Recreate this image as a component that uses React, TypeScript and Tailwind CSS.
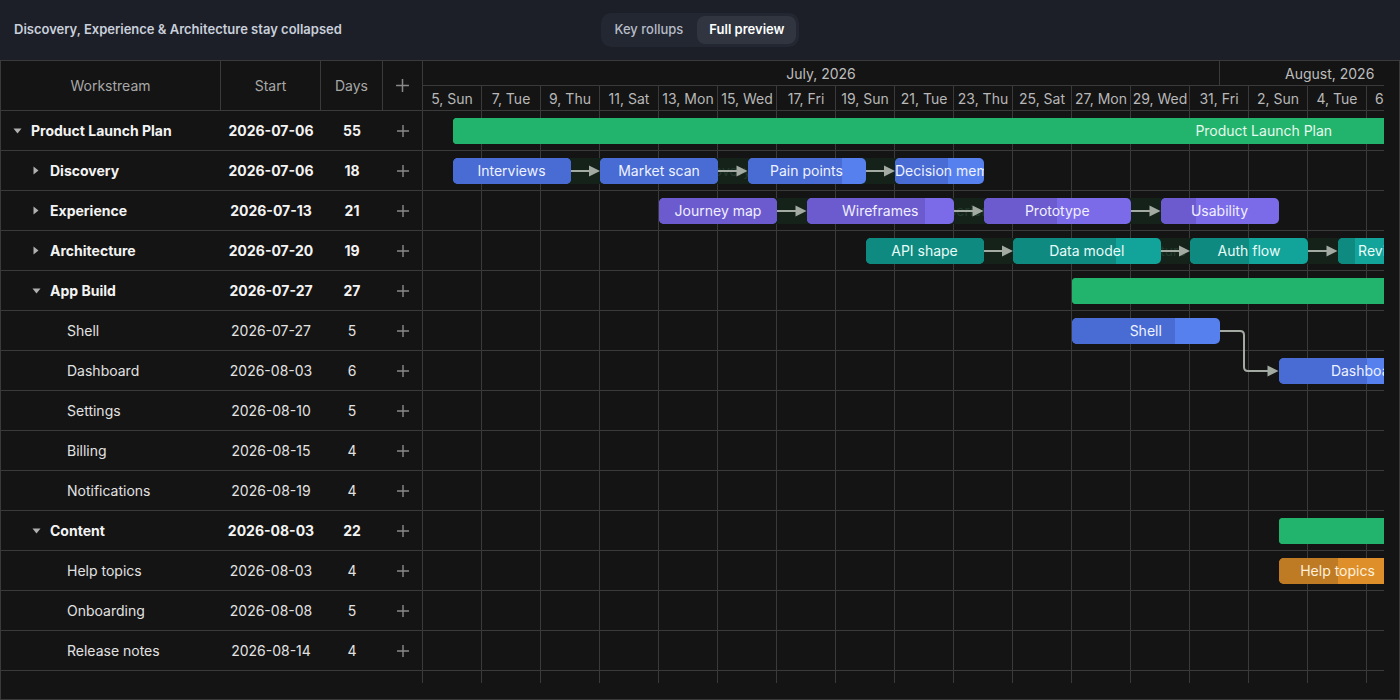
import React from 'react';

const D = 29.5;

type Color = 'green' | 'blue' | 'purple' | 'teal' | 'orange';
const PAL: Record<Color, { base: string; prog: string; text: string; round: string }> = {
  green: { base: 'bg-[#22b46c]', prog: 'bg-[#22b46c]', text: 'text-[#e6f7ec]', round: 'rounded-[4px]' },
  blue: { base: 'bg-[#5580ee]', prog: 'bg-[#486bd4]', text: 'text-[#eef2ff]', round: 'rounded-[5px]' },
  purple: { base: 'bg-[#7b6be8]', prog: 'bg-[#6b5bcf]', text: 'text-[#f1efff]', round: 'rounded-[5px]' },
  teal: { base: 'bg-[#12a39a]', prog: 'bg-[#0e8a80]', text: 'text-[#e8fbf8]', round: 'rounded-[5px]' },
  orange: { base: 'bg-[#de8f2a]', prog: 'bg-[#bf7a24]', text: 'text-[#fdf0dc]', round: 'rounded-[5px]' },
};

type Task = { label: string; start: number; days: number; pct: number; color: Color };
type Row = {
  name: string;
  level: 0 | 1 | 2;
  caret?: 'down' | 'right';
  start: string;
  days: number;
  bold?: boolean;
  band?: { start: number; days: number; label: string };
  bars: Task[];
  chain?: boolean;
};

const ROWS: Row[] = [
  {
    name: 'Product Launch Plan', level: 0, caret: 'down', start: '2026-07-06', days: 55, bold: true,
    bars: [{ label: 'Product Launch Plan', start: 1, days: 55, pct: 100, color: 'green' }],
  },
  {
    name: 'Discovery', level: 1, caret: 'right', start: '2026-07-06', days: 18, bold: true, chain: true,
    band: { start: 1, days: 18, label: 'Discovery' },
    bars: [
      { label: 'Interviews', start: 1, days: 4, pct: 100, color: 'blue' },
      { label: 'Market scan', start: 6, days: 4, pct: 100, color: 'blue' },
      { label: 'Pain points', start: 11, days: 4, pct: 80, color: 'blue' },
      { label: 'Decision memo', start: 16, days: 3, pct: 60, color: 'blue' },
    ],
  },
  {
    name: 'Experience', level: 1, caret: 'right', start: '2026-07-13', days: 21, bold: true, chain: true,
    band: { start: 8, days: 21, label: 'Experience' },
    bars: [
      { label: 'Journey map', start: 8, days: 4, pct: 100, color: 'purple' },
      { label: 'Wireframes', start: 13, days: 5, pct: 80, color: 'purple' },
      { label: 'Prototype', start: 19, days: 5, pct: 50, color: 'purple' },
      { label: 'Usability', start: 25, days: 4, pct: 30, color: 'purple' },
    ],
  },
  {
    name: 'Architecture', level: 1, caret: 'right', start: '2026-07-20', days: 19, bold: true, chain: true,
    band: { start: 15, days: 19, label: 'Architecture' },
    bars: [
      { label: 'API shape', start: 15, days: 4, pct: 100, color: 'teal' },
      { label: 'Data model', start: 20, days: 5, pct: 70, color: 'teal' },
      { label: 'Auth flow', start: 26, days: 4, pct: 50, color: 'teal' },
      { label: 'Review', start: 31, days: 3, pct: 20, color: 'teal' },
    ],
  },
  {
    name: 'App Build', level: 1, caret: 'down', start: '2026-07-27', days: 27, bold: true,
    bars: [{ label: 'App Build', start: 22, days: 27, pct: 100, color: 'green' }],
  },
  { name: 'Shell', level: 2, start: '2026-07-27', days: 5, bars: [{ label: 'Shell', start: 22, days: 5, pct: 70, color: 'blue' }] },
  { name: 'Dashboard', level: 2, start: '2026-08-03', days: 6, bars: [{ label: 'Dashboard', start: 29, days: 6, pct: 50, color: 'blue' }] },
  { name: 'Settings', level: 2, start: '2026-08-10', days: 5, bars: [{ label: 'Settings', start: 36, days: 5, pct: 30, color: 'blue' }] },
  { name: 'Billing', level: 2, start: '2026-08-15', days: 4, bars: [{ label: 'Billing', start: 41, days: 4, pct: 0, color: 'blue' }] },
  { name: 'Notifications', level: 2, start: '2026-08-19', days: 4, bars: [{ label: 'Notifications', start: 45, days: 4, pct: 0, color: 'blue' }] },
  {
    name: 'Content', level: 1, caret: 'down', start: '2026-08-03', days: 22, bold: true,
    bars: [{ label: 'Content', start: 29, days: 22, pct: 100, color: 'green' }],
  },
  { name: 'Help topics', level: 2, start: '2026-08-03', days: 4, bars: [{ label: 'Help topics', start: 29, days: 4, pct: 50, color: 'orange' }] },
  { name: 'Onboarding', level: 2, start: '2026-08-08', days: 5, bars: [{ label: 'Onboarding', start: 34, days: 5, pct: 30, color: 'orange' }] },
  { name: 'Release notes', level: 2, start: '2026-08-14', days: 4, bars: [{ label: 'Release notes', start: 40, days: 4, pct: 0, color: 'orange' }] },
];

const PAD: Record<number, string> = { 0: 'pl-[8px]', 1: 'pl-[27px]', 2: 'pl-[44px]' };
const WD = ['Sun', 'Mon', 'Tue', 'Wed', 'Thu', 'Fri', 'Sat'];
const DAYCOLS = Array.from({ length: 36 }, (_, i) => {
  const d = new Date(2026, 6, 5 + i * 2);
  return `${d.getDate()}, ${WD[d.getDay()]}`;
});

function PlusIcon({ size = 14 }: { size?: number }) {
  return (
    <svg width={size} height={size} viewBox="0 0 14 14" fill="none">
      <path d="M7 1v12M1 7h12" stroke="#8a8a8a" strokeWidth="1.4" />
    </svg>
  );
}

function Caret({ dir }: { dir: 'down' | 'right' }) {
  return dir === 'down' ? (
    <svg width="9" height="6" viewBox="0 0 9 6">
      <path d="M0.5 0.5h8L4.5 5.5z" fill="#b0b0b0" />
    </svg>
  ) : (
    <svg width="6" height="9" viewBox="0 0 6 9">
      <path d="M0.5 0.5v8L5.5 4.5z" fill="#b0b0b0" />
    </svg>
  );
}

function Bar({ t }: { t: Task }) {
  const p = PAL[t.color];
  return (
    <div
      className={`absolute top-[7px] h-[26px] overflow-hidden ${p.round} ${p.base}`}
      style={{ left: t.start * D, width: t.days * D }}
    >
      <div className={`absolute inset-y-0 left-0 ${p.prog}`} style={{ width: `${t.pct}%` }} />
      <div className={`relative w-full overflow-hidden whitespace-nowrap text-center text-[14px] leading-[26px] ${p.text}`}>
        {t.label}
      </div>
    </div>
  );
}

function Arrows() {
  const parts: React.ReactNode[] = [];
  const C = '#a2aaa2';
  const head = (x: number, y: number, k: string) => (
    <path key={k} d={`M${x - 11} ${y - 5.5}L${x} ${y}L${x - 11} ${y + 5.5}z`} fill={C} />
  );
  ROWS.forEach((r, ri) => {
    if (!r.chain) return;
    const y = ri * 40 + 20;
    for (let i = 0; i < r.bars.length - 1; i++) {
      const a = r.bars[i];
      const b = r.bars[i + 1];
      const x1 = (a.start + a.days) * D;
      const x2 = b.start * D;
      parts.push(<path key={`l${ri}-${i}`} d={`M${x1} ${y}H${x2 - 10}`} stroke={C} strokeWidth="2" fill="none" />);
      parts.push(head(x2, y, `h${ri}-${i}`));
    }
  });
  // Shell -> Dashboard
  const sx = 27 * D;
  const dx = 29 * D;
  const y1 = 5 * 40 + 20;
  const y2 = 6 * 40 + 20;
  const vx = sx + 24.5;
  parts.push(
    <path
      key="sd"
      d={`M${sx} ${y1}H${vx - 4}Q${vx} ${y1} ${vx} ${y1 + 4}V${y2 - 4}Q${vx} ${y2} ${vx + 4} ${y2}H${dx - 10}`}
      stroke={C}
      strokeWidth="2"
      fill="none"
    />
  );
  parts.push(head(dx, y2, 'sdh'));
  return (
    <svg className="pointer-events-none relative col-start-1 row-start-1" width={2100} height={560}>
      {parts}
    </svg>
  );
}

export default function App() {
  return (
    <div className="flex h-[700px] w-[1400px] flex-col bg-[#1c1f27] font-['Inter',sans-serif]">
      {/* top bar */}
      <div className="flex h-[60px] shrink-0 items-center px-[14px]">
        <div className="flex-1 text-[13px] font-semibold text-[#c9cfdb]">
          Discovery, Experience &amp; Architecture stay collapsed
        </div>
        <div className="flex items-center gap-[3px] rounded-[10px] bg-[#232731] p-[3px]">
          <div className="flex h-[28px] items-center rounded-[8px] px-[11px] text-[13px] font-medium text-[#b6bcc8]">
            Key rollups
          </div>
          <div className="flex h-[28px] items-center rounded-[8px] bg-[#30353f] px-[12px] text-[13px] font-semibold text-white">
            Full preview
          </div>
        </div>
        <div className="flex-1" />
      </div>

      {/* gantt */}
      <div className="flex h-[640px] flex-col border border-[#3a3a3a] bg-[#141414]">
        <div className="flex h-[622px]">
          {/* grid table */}
          <div className="flex w-[422px] shrink-0 flex-col border-r border-[#3a3a3a]">
            <div className="flex h-[50px] shrink-0 border-b border-[#3a3a3a] text-[14px] text-[#a8a8a8]">
              <div className="flex w-[220px] items-center justify-center border-r border-[#3a3a3a]">Workstream</div>
              <div className="flex w-[100px] items-center justify-center border-r border-[#3a3a3a]">Start</div>
              <div className="flex w-[62px] items-center justify-center border-r border-[#3a3a3a]">Days</div>
              <div className="flex flex-1 items-center justify-center">
                <PlusIcon size={15} />
              </div>
            </div>
            {ROWS.map((r) => (
              <div
                key={r.name}
                className={`flex h-[40px] shrink-0 border-b border-[#3a3a3a] text-[14px] ${
                  r.bold ? 'font-bold text-[#f3f3f3]' : 'font-normal text-[#e2e2e2]'
                }`}
              >
                <div className={`flex w-[220px] items-center ${PAD[r.level]}`}>
                  <div className="flex w-[16px] items-center justify-center">{r.caret && <Caret dir={r.caret} />}</div>
                  <span className="ml-[6px] whitespace-nowrap">{r.name}</span>
                </div>
                <div className="flex w-[100px] items-center justify-center">{r.start}</div>
                <div className="flex w-[62px] items-center justify-center">{r.days}</div>
                <div className="flex flex-1 items-center justify-center">
                  <PlusIcon />
                </div>
              </div>
            ))}
          </div>

          {/* chart */}
          <div className="w-[961px] shrink-0 overflow-hidden">
            <div className="w-[2100px]">
              <div className="flex h-[25px] border-b border-[#3a3a3a] text-[14px] text-[#bdbdbd]">
                <div className="flex w-[797px] shrink-0 items-center justify-center border-r border-[#3a3a3a]">July, 2026</div>
                <div className="flex flex-1 items-center pl-[65px]">August, 2026</div>
              </div>
              <div className="flex h-[25px] border-b border-[#3a3a3a] text-[14px] text-[#b8b8b8]">
                {DAYCOLS.map((d, i) => (
                  <div key={i} className="flex w-[59px] shrink-0 items-center justify-center whitespace-nowrap border-r border-[#3a3a3a]">
                    {d}
                  </div>
                ))}
              </div>
              <div className="grid">
                <div className="relative col-start-1 row-start-1 flex h-[572px]">
                  {DAYCOLS.map((_, i) => (
                    <div key={i} className="h-full w-[59px] shrink-0 border-r border-[#3a3a3a]" />
                  ))}
                </div>
                <div className="relative col-start-1 row-start-1">
                  {ROWS.map((r, ri) => (
                    <div key={ri} className="relative h-[40px] border-b border-[#3a3a3a]">
                      {r.band && (
                        <div
                          className="absolute top-[7px] h-[26px] overflow-hidden rounded-[5px] bg-[#15221a] text-center"
                          style={{ left: r.band.start * D, width: r.band.days * D }}
                        >
                          <span className="whitespace-nowrap text-[14px] leading-[26px] text-[#223a2b]">{r.band.label}</span>
                        </div>
                      )}
                    </div>
                  ))}
                </div>
                <Arrows />
                <div className="relative col-start-1 row-start-1">
                  {ROWS.map((r, ri) => (
                    <div key={ri} className="relative h-[40px]">
                      {r.bars.map((t) => (
                        <Bar key={t.label} t={t} />
                      ))}
                    </div>
                  ))}
                </div>
              </div>
            </div>
          </div>
          <div className="flex-1" />
        </div>
        <div className="flex-1" />
      </div>
    </div>
  );
}
